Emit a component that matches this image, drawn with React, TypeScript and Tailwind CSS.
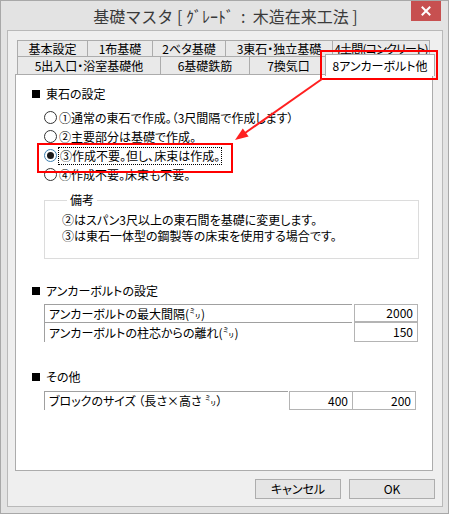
import React from "react";

const jp = "font-['Noto_Sans_CJK_JP','Noto_Sans',sans-serif] [font-feature-settings:'palt']";

function Tab({ w, label, tight }: { w: string; label: string; tight?: boolean }) {
  return (
    <div
      className={`${w} h-full -ml-px first:ml-0 border border-[#acacac] bg-[#e9e9e9] flex items-center justify-center text-[12px] leading-none text-black whitespace-nowrap ${
        tight ? "tracking-[-0.8px]" : ""
      }`}
    >
      {label}
    </div>
  );
}

function Radio({ checked }: { checked?: boolean }) {
  return (
    <span
      className={`w-[13px] h-[13px] shrink-0 rounded-full border bg-white flex items-center justify-center ${
        checked ? "border-[#3c7fb1]" : "border-[#333333]"
      }`}
    >
      {checked && <span className="w-[7px] h-[7px] rounded-full bg-[#1a1a1a]" />}
    </span>
  );
}

function Heading({ children }: { children: React.ReactNode }) {
  return (
    <div className="flex items-center h-[16px] text-[12px] leading-[16px]">
      <span className="w-[8px] h-[8px] bg-black mr-[6px]" />
      <span>{children}</span>
    </div>
  );
}

function LabelCell({ w, h, children }: { w: string; h: string; children: React.ReactNode }) {
  return (
    <div className={`${w} ${h} border-t border-l border-[#a0a0a0] pl-[4px] flex items-center text-[12px] leading-none`}>
      {children}
    </div>
  );
}

function ValueCell({ h, children }: { h: string; children: React.ReactNode }) {
  return (
    <div className={`w-[64px] ${h} border border-[#b4b4b4] pr-[4px] flex items-center justify-end text-[12px] leading-none`}>
      {children}
    </div>
  );
}

const options = [
  "①通常の東石で作成。（3尺間隔で作成します）",
  "②主要部分は基礎で作成。",
  "③作成不要。但し、床束は作成。",
  "④作成不要。床束も不要。",
];

export default function App() {
  return (
    <div className={`relative w-[449px] h-[514px] border border-[#a8a8a8] bg-[#e3e3e3] text-black ${jp}`}>
      {/* title bar */}
      <div className="relative h-[29px] flex items-center justify-center">
        <span className="text-[16px] text-[#3a3a3a] whitespace-pre [font-feature-settings:normal] pl-[2px]">
          {"基礎マスタ [ ｸﾞﾚｰﾄﾞ  :  木造在来工法 ]"}
        </span>
        <div className="absolute right-[7px] top-0 w-[30px] h-[20px] bg-[#c75050] flex items-center justify-center">
          <svg width="10" height="10" viewBox="0 0 10 10">
            <path d="M1.5 1.5 L8.5 8.5 M8.5 1.5 L1.5 8.5" stroke="#fff" strokeWidth="2" strokeLinecap="square" />
          </svg>
        </div>
      </div>

      {/* client area */}
      <div className="ml-[6px] w-[436px] h-[477px] border border-[#b9b9b9] bg-[#efefef] pt-[9px]">
        {/* tabs */}
        <div className="ml-[9px] h-[17px] flex">
          <Tab w="w-[71px]" label="基本設定" />
          <Tab w="w-[66px]" label="1布基礎" />
          <Tab w="w-[74px]" label="2ベタ基礎" />
          <Tab w="w-[108px]" label="3東石・独立基礎" />
          <Tab w="w-[98px]" label="4土間(コンクリート)" tight />
        </div>
        <div className="ml-[9px] h-[18px] flex items-start -mt-px">
          <div className="w-[144px] h-[19px] border border-[#acacac] bg-[#e9e9e9] flex items-center justify-center text-[12px] leading-none">
            5出入口・浴室基礎他
          </div>
          <div className="w-[90px] h-[19px] -ml-px border border-[#acacac] bg-[#e9e9e9] flex items-center justify-center text-[12px] leading-none">
            6基礎鉄筋
          </div>
          <div className="w-[79px] h-[19px] -ml-px border border-[#acacac] bg-[#e9e9e9] flex items-center justify-center text-[12px] leading-none">
            7換気口
          </div>
          <div className="relative z-10 w-[110px] h-[22px] -ml-[3px] -mt-[2px] border border-b-0 border-[#acacac] bg-white flex items-center justify-center text-[12px] leading-none">
            8アンカーボルト他
          </div>
        </div>

        {/* panel */}
        <div className="ml-[7px] w-[418px] h-[397px] border border-[#acacac] bg-white pl-[16px]">
          <div className="mt-[11px]">
            <Heading>東石の設定</Heading>
          </div>

          <div className="mt-[6px] ml-[12px]">
            {options.map((o, i) => (
              <div key={o} className="h-[19px] flex items-center text-[12px] leading-none">
                <Radio checked={i === 2} />
                {i === 2 ? (
                  <span className="ml-[1px] px-px py-[2px] border border-dotted border-black">{o}</span>
                ) : (
                  <span className="ml-[2px]">{o}</span>
                )}
              </div>
            ))}
          </div>

          <fieldset className="mt-[8px] ml-[12px] w-[375px] border border-[#dcdcdc] pt-[4px] pb-[14px] pl-[17px]">
            <legend className="ml-[5px] px-[3px] text-[12px] leading-[16px]">備考</legend>
            <div className="text-[12px] leading-[16px]">②はスパン3尺以上の東石間を基礎に変更します。</div>
            <div className="text-[12px] leading-[16px]">③は東石一体型の鋼製等の床束を使用する場合です。</div>
          </fieldset>

          <div className="mt-[24px]">
            <Heading>アンカーボルトの設定</Heading>
          </div>
          <div className="mt-[5px] ml-[12px] w-[374px]">
            <div className="flex justify-between">
              <LabelCell w="w-[308px]" h="h-[18px]">アンカーボルトの最大間隔(㍉)</LabelCell>
              <ValueCell h="h-[18px]">2000</ValueCell>
            </div>
            <div className="flex justify-between">
              <LabelCell w="w-[308px]" h="h-[20px]">アンカーボルトの柱芯からの離れ(㍉)</LabelCell>
              <ValueCell h="h-[20px]">150</ValueCell>
            </div>
          </div>

          <div className="mt-[27px]">
            <Heading>その他</Heading>
          </div>
          <div className="mt-[6px] ml-[12px] w-[374px] flex">
            <LabelCell w="w-[244px]" h="h-[19px]">ブロックのサイズ （長さ×高さ ㍉）</LabelCell>
            <div className="ml-[1px]">
              <ValueCell h="h-[19px]">400</ValueCell>
            </div>
            <div className="-ml-px">
              <ValueCell h="h-[19px]">200</ValueCell>
            </div>
          </div>
        </div>

        {/* buttons */}
        <div className="mt-[8px] pr-[7px] flex justify-end gap-[8px]">
          <button className="w-[86px] h-[20px] border border-[#adadad] bg-[#e5e5e5] text-[12px] leading-none">キャンセル</button>
          <button className="w-[86px] h-[20px] border border-[#adadad] bg-[#e5e5e5] text-[12px] leading-none">OK</button>
        </div>
      </div>

      {/* annotations */}
      <div className="absolute left-[319px] top-[49px] w-[118px] h-[30px] border-2 border-[#ff0000] z-20 pointer-events-none" />
      <div className="absolute left-[36px] top-[142px] w-[196px] h-[30px] border-2 border-[#ff0000] z-20 pointer-events-none" />
      <svg className="absolute left-[228px] top-[74px] z-20 pointer-events-none" width="100" height="70" viewBox="0 0 100 70">
        <line x1="93" y1="4" x2="16" y2="58" stroke="#ff2020" strokeWidth="2" />
        <polygon points="6,65 19.6,61.6 13.8,53.4" fill="#ff2020" />
      </svg>
    </div>
  );
}
